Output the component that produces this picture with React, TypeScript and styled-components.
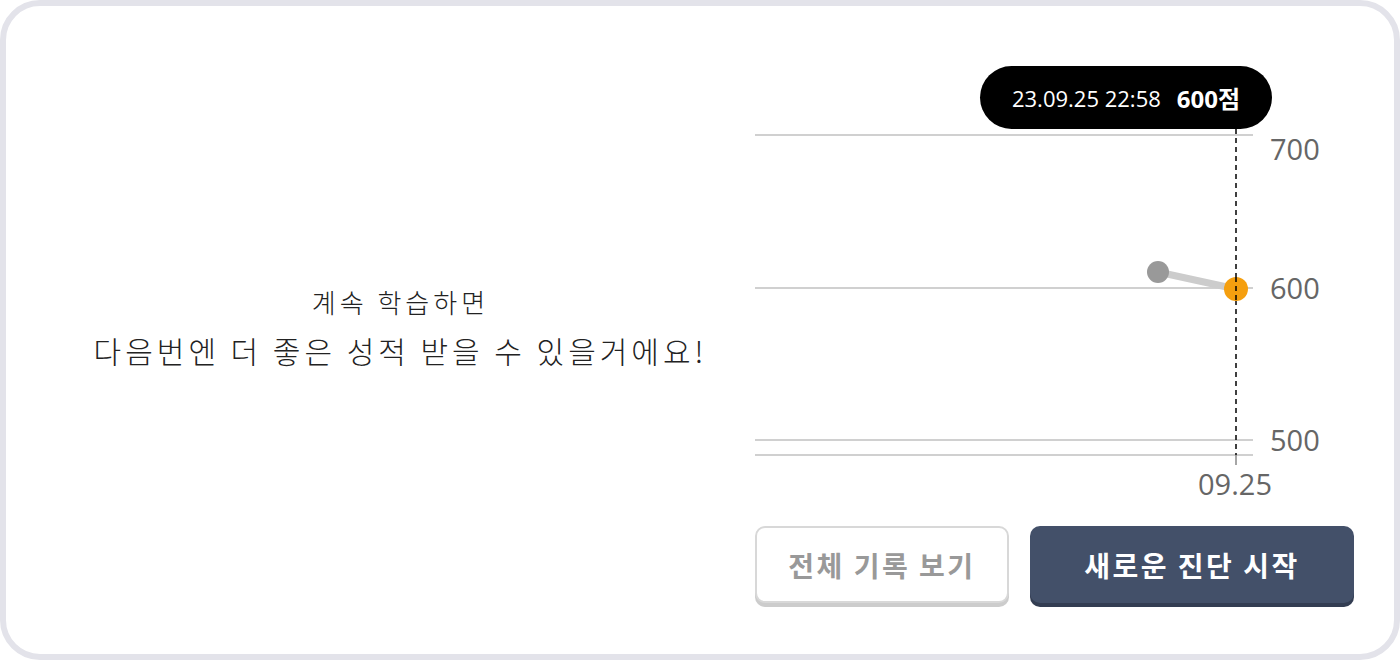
import React from 'react';
import styled, { createGlobalStyle } from 'styled-components';

const GlobalStyle = createGlobalStyle`
  html, body {
    margin: 0;
    padding: 0;
    background: #ffffff;
  }
  body {
    font-family: "Open Sans", "Noto Sans CJK KR", sans-serif;
  }
`;

const Card = styled.div`
  box-sizing: border-box;
  width: 1400px;
  height: 660px;
  border: 6px solid #e3e3ea;
  border-radius: 40px;
  background: #ffffff;
  padding: 54px 40px 0 40px;
  display: grid;
  grid-template-columns: 1fr 599px;
`;

const Message = styled.div`
  display: flex;
  flex-direction: column;
  align-items: center;
  justify-content: center;
  color: #222;
  padding-bottom: 60px;
`;

const Line = styled.div<{ size: number; spacing: number }>`
  font-family: "Noto Sans CJK KR", sans-serif;
  font-weight: 300;
  font-size: ${({ size }) => size}px;
  letter-spacing: ${({ spacing }) => spacing}px;
  line-height: ${({ size }) => size + 21}px;
  white-space: nowrap;
`;

const RightColumn = styled.div`
  display: flex;
  flex-direction: column;
  gap: 26px;
`;

const ChartWrap = styled.div`
  position: relative;
  width: 599px;
  height: 440px;

  svg {
    overflow: visible;
    display: block;
  }
`;

const Tooltip = styled.div`
  position: absolute;
  left: 225px;
  top: 6px;
  width: 292px;
  height: 63px;
  border-radius: 32px;
  background: #000;
  color: #fff;
  display: flex;
  align-items: center;
  justify-content: center;
  gap: 16px;
  font-size: 22px;
`;

const Score = styled.span`
  font-weight: 700;
  font-size: 24px;
`;

const Buttons = styled.div`
  display: flex;
  gap: 21px;
`;

const Button = styled.button<{ primary?: boolean }>`
  box-sizing: border-box;
  height: 77px;
  width: ${({ primary }) => (primary ? 324 : 254)}px;
  border-radius: 10px;
  border: ${({ primary }) => (primary ? 'none' : '2px solid #d8d8d8')};
  background: ${({ primary }) => (primary ? '#435069' : '#ffffff')};
  color: ${({ primary }) => (primary ? '#ffffff' : '#999999')};
  box-shadow: 0 4px 0 ${({ primary }) => (primary ? '#333d52' : '#cccccc')};
  font-family: "Noto Sans CJK KR", sans-serif;
  font-weight: 700;
  font-size: 28px;
  letter-spacing: 2.5px;
  cursor: pointer;
`;

const axisText = {
  fontFamily: '"Open Sans", sans-serif',
  fontSize: 29,
  fill: '#666',
};

const Chart: React.FC = () => (
  <svg width="599" height="440" viewBox="0 0 599 440">
    <g stroke="#d0d0d0" strokeWidth="2">
      <line x1="0" y1="75" x2="498" y2="75" />
      <line x1="0" y1="228" x2="498" y2="228" />
      <line x1="0" y1="380" x2="498" y2="380" />
      <line x1="0" y1="395" x2="498" y2="395" />
    </g>
    <text x="515" y="88" dominantBaseline="central" style={axisText}>700</text>
    <text x="515" y="227" dominantBaseline="central" style={axisText}>600</text>
    <text x="515" y="379" dominantBaseline="central" style={axisText}>500</text>
    <text x="480" y="423" textAnchor="middle" dominantBaseline="central" style={axisText}>09.25</text>
    <line x1="481" y1="69" x2="481" y2="395" stroke="#000" strokeWidth="1.5" strokeDasharray="5 4" />
    <line x1="481" y1="395" x2="481" y2="405" stroke="#888" strokeWidth="1.5" />
    <line x1="403" y1="212" x2="481" y2="229" stroke="#cccccc" strokeWidth="7" />
    <circle cx="403" cy="212" r="11" fill="#999" />
    <circle cx="481" cy="229" r="12" fill="#f59f0f" />
    <line x1="481" y1="217" x2="481" y2="241" stroke="#000" strokeWidth="1.5" strokeDasharray="5 4" />
  </svg>
);

export default function App() {
  return (
    <>
      <GlobalStyle />
      <Card>
        <Message>
          <Line size={26} spacing={4}>계속 학습하면</Line>
          <Line size={30} spacing={4}>다음번엔 더 좋은 성적 받을 수 있을거에요!</Line>
        </Message>
        <RightColumn>
          <ChartWrap>
            <Chart />
            <Tooltip>
              <span>23.09.25 22:58</span>
              <Score>600점</Score>
            </Tooltip>
          </ChartWrap>
          <Buttons>
            <Button>전체 기록 보기</Button>
            <Button primary>새로운 진단 시작</Button>
          </Buttons>
        </RightColumn>
      </Card>
    </>
  );
}
